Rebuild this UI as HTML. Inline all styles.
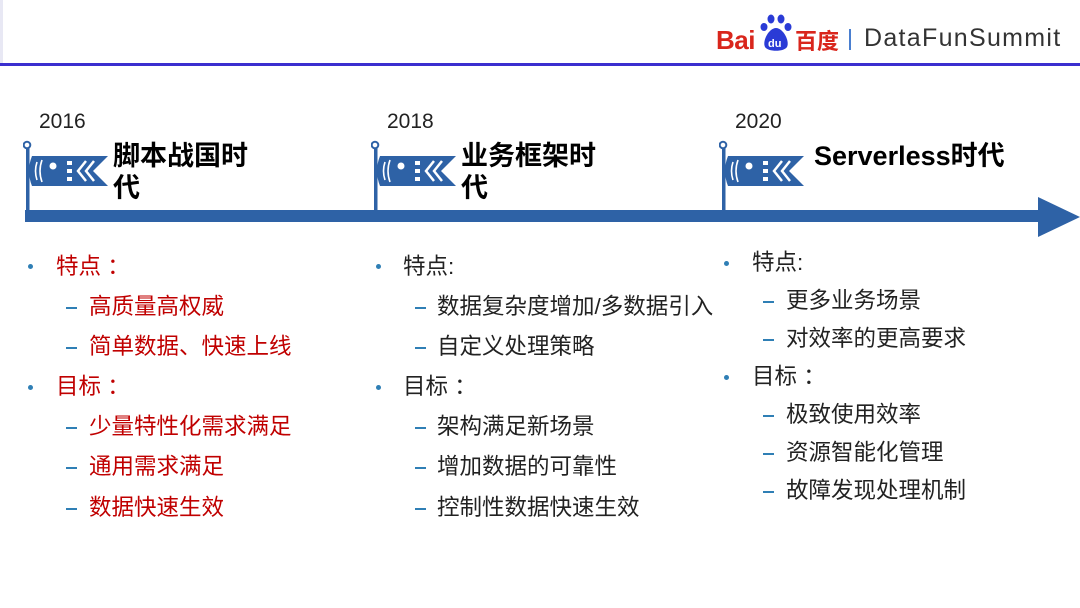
<!DOCTYPE html>
<html><head><meta charset="utf-8"><style>
body{margin:0;width:1080px;height:608px;background:#fff;position:relative;overflow:hidden;font-family:"Liberation Sans","Noto Sans CJK SC",sans-serif}
.a{position:absolute;white-space:nowrap}
.yr{font-size:21px;color:#222}
.tt{font-size:27px;font-weight:bold;color:#000;line-height:32px}
.l{font-size:22.5px;line-height:26px}
.r{color:#c00000}.k{color:#222}
.dot{position:absolute;width:5px;height:5px;border-radius:50%;background:#2f7fb5}
.dash{position:absolute;width:11px;height:2px;background:#2f7fb5}
</style></head><body>
<div style="position:absolute;left:0;top:0;width:3px;height:64px;background:#e8e8f4"></div>
<div style="position:absolute;left:0;top:63px;width:1080px;height:3px;background:#3b2fcf"></div>
<!-- logo -->
<div class="a" style="left:716px;top:25px;font-size:26px;font-weight:bold;color:#d9261c;letter-spacing:-0.5px">Bai</div>
<svg class="a" style="left:756px;top:12px" width="40" height="40" viewBox="0 0 40 40">
<ellipse cx="8" cy="15" rx="3.5" ry="4" fill="#2a3bd6"/><ellipse cx="15" cy="7" rx="3.5" ry="4.5" fill="#2a3bd6"/><ellipse cx="25" cy="7" rx="3.5" ry="4.5" fill="#2a3bd6"/><ellipse cx="32" cy="15" rx="3.5" ry="4" fill="#2a3bd6"/>
<path d="M20 16 C13 16 6 29 9 35 C12 40 28 40 31 35 C34 29 27 16 20 16Z" fill="#2a3bd6"/>
<text x="12" y="35" font-size="11" font-weight="bold" fill="#fff" font-family="Liberation Sans">du</text></svg>
<div class="a" style="left:795px;top:24px;font-size:22px;font-weight:bold;color:#d9261c">百度</div>
<div style="position:absolute;left:849px;top:29px;width:1.5px;height:21px;background:#4a7fd0"></div>
<div class="a" style="left:864px;top:24px;font-size:25px;color:#333;letter-spacing:1.3px">DataFunSummit</div>

<!-- timeline -->
<div style="position:absolute;left:25px;top:210px;width:1020px;height:12px;background:#2e62a6"></div>
<svg class="a" style="left:1038px;top:197px" width="42" height="40"><path d="M0 0 L42 20 L0 40Z" fill="#2e62a6"/></svg>

<svg width="0" height="0" style="position:absolute"><defs><g id="fl">
<circle cx="4" cy="7" r="3.3" fill="none" stroke="#2e62a6" stroke-width="2"/>
<rect x="3" y="10" width="3.5" height="62" fill="#2e62a6"/>
<path d="M9 18 L85 18 L70 33 L85 48 L9 48 Q3 33 9 18Z" fill="#2e62a6"/>
<path d="M14 24 Q11 33 14 42" stroke="#fff" stroke-width="1.6" fill="none"/>
<path d="M19 22 Q15 33 19 44" stroke="#fff" stroke-width="1.6" fill="none"/>
<circle cx="30" cy="28" r="3.5" fill="#fff"/>
<rect x="44" y="23" width="5" height="4" fill="#fff"/><rect x="44" y="31" width="5" height="4" fill="#fff"/><rect x="44" y="39" width="5" height="4" fill="#fff"/>
<path d="M63 23 L55 33 L63 43" stroke="#fff" stroke-width="2.5" fill="none"/>
<path d="M71 23 L63 33 L71 43" stroke="#fff" stroke-width="2.5" fill="none"/>
</g></defs></svg>
<svg class="a" style="left:23px;top:138px" width="90" height="80"><use href="#fl"/></svg>
<svg class="a" style="left:371px;top:138px" width="90" height="80"><use href="#fl"/></svg>
<svg class="a" style="left:719px;top:138px" width="90" height="80"><use href="#fl"/></svg>

<div class="a yr" style="left:39px;top:110px">2016</div>
<div class="a yr" style="left:387px;top:110px">2018</div>
<div class="a yr" style="left:735px;top:110px">2020</div>
<div class="a tt" style="left:113px;top:140px">脚本战国时<br>代</div>
<div class="a tt" style="left:461px;top:140px">业务框架时<br>代</div>
<div class="a tt" style="left:814px;top:140px">Serverless时代</div>

<!-- col1 -->
<div class="dot" style="left:28px;top:264px"></div><div class="a l r" style="left:56px;top:254px">特点 ：</div>
<div class="dash" style="left:66px;top:307px"></div><div class="a l r" style="left:89px;top:294px">高质量高权威</div>
<div class="dash" style="left:66px;top:347px"></div><div class="a l r" style="left:89px;top:334px">简单数据、快速上线</div>
<div class="dot" style="left:28px;top:385px"></div><div class="a l r" style="left:56px;top:374px">目标 ：</div>
<div class="dash" style="left:66px;top:427px"></div><div class="a l r" style="left:89px;top:414px">少量特性化需求满足</div>
<div class="dash" style="left:66px;top:467px"></div><div class="a l r" style="left:89px;top:454px">通用需求满足</div>
<div class="dash" style="left:66px;top:508px"></div><div class="a l r" style="left:89px;top:495px">数据快速生效</div>
<!-- col2 -->
<div class="dot" style="left:376px;top:264px"></div><div class="a l k" style="left:403px;top:254px">特点:</div>
<div class="dash" style="left:415px;top:307px"></div><div class="a l k" style="left:437px;top:294px">数据复杂度增加/多数据引入</div>
<div class="dash" style="left:415px;top:347px"></div><div class="a l k" style="left:437px;top:334px">自定义处理策略</div>
<div class="dot" style="left:376px;top:385px"></div><div class="a l k" style="left:403px;top:374px">目标 ：</div>
<div class="dash" style="left:415px;top:427px"></div><div class="a l k" style="left:437px;top:414px">架构满足新场景</div>
<div class="dash" style="left:415px;top:467px"></div><div class="a l k" style="left:437px;top:454px">增加数据的可靠性</div>
<div class="dash" style="left:415px;top:508px"></div><div class="a l k" style="left:437px;top:495px">控制性数据快速生效</div>
<!-- col3 -->
<div class="dot" style="left:724px;top:261px"></div><div class="a l k" style="left:752px;top:250px">特点:</div>
<div class="dash" style="left:763px;top:301px"></div><div class="a l k" style="left:786px;top:288px">更多业务场景</div>
<div class="dash" style="left:763px;top:339px"></div><div class="a l k" style="left:786px;top:326px">对效率的更高要求</div>
<div class="dot" style="left:724px;top:375px"></div><div class="a l k" style="left:752px;top:364px">目标 ：</div>
<div class="dash" style="left:763px;top:415px"></div><div class="a l k" style="left:786px;top:402px">极致使用效率</div>
<div class="dash" style="left:763px;top:453px"></div><div class="a l k" style="left:786px;top:440px">资源智能化管理</div>
<div class="dash" style="left:763px;top:491px"></div><div class="a l k" style="left:786px;top:478px">故障发现处理机制</div>
</body></html>
